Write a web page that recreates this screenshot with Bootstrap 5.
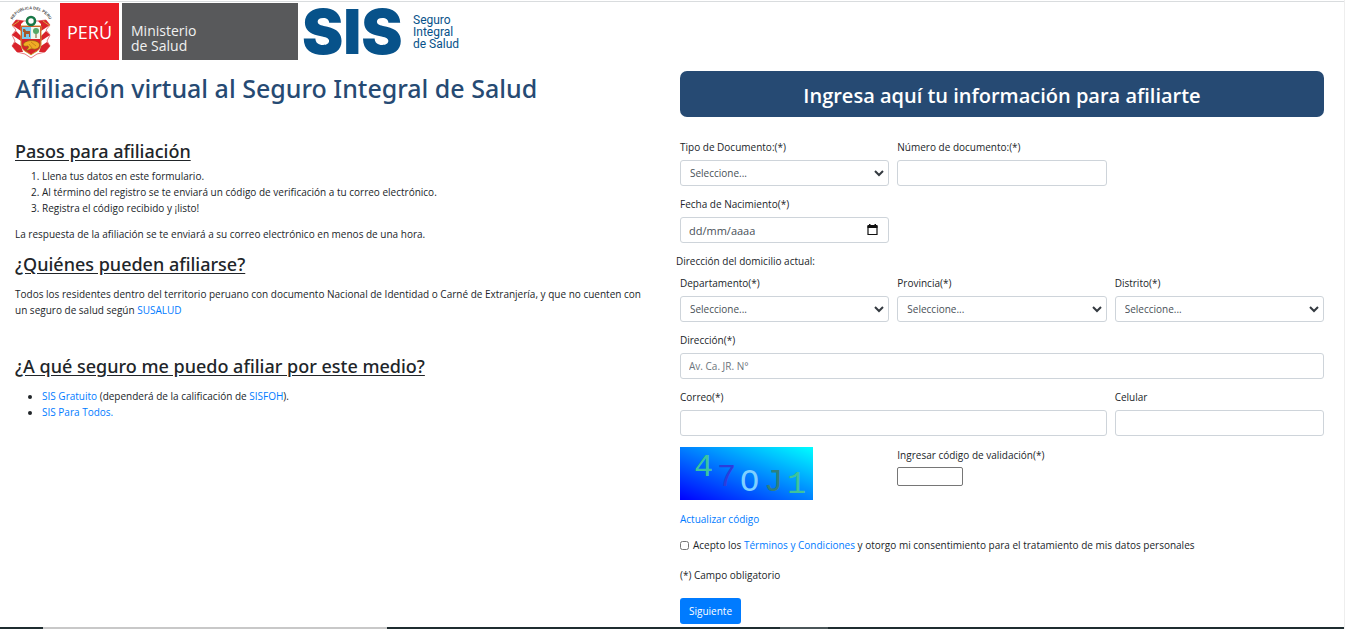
<!DOCTYPE html>
<html lang="es">
<head>
<meta charset="utf-8">
<meta name="viewport" content="width=device-width, initial-scale=1">
<title>Afiliación virtual al SIS</title>
<link href="https://cdn.jsdelivr.net/npm/bootstrap@5.3.0/dist/css/bootstrap.min.css" rel="stylesheet">
<style>
  :root { --navy: #264a73; --azul: #007bff; }
  body { font-family: "Open Sans", "Noto Sans", sans-serif; font-size: 10px; line-height: 16px; color: #212529; border-right: 1px solid #eee; }
  a { color: var(--azul); text-decoration: none; }
  .site-head { border-top: 1px solid #d9dcde; margin-top: 1px; padding: 1px 9px 0; height: 59px; margin-bottom: 2px; }
  .escudo { width: 44px; height: 57px; margin-right: 7px; flex: none; }
  .peru { background: #ed1c24; color: #fff; width: 59px; font-size: 18px; margin-right: 3px; }
  .minsa { background: #58595b; color: #f1f1f1; width: 176px; padding: 20px 9px 0; font-size: 14px; line-height: 15px; }
  .sis-mark { font: 900 62px/58px Inter, sans-serif; color: #07528a; width: 108px; padding-left: 4px; }
  .sis-name { font: 400 12px/12px Roboto, sans-serif; color: #07528a; padding: 11px 0 0 7px; }
  .side { padding: 0 24px 0 15px; }
  .title-main { font-family: "Noto Sans", "Open Sans", sans-serif; font-size: 25px; line-height: 34px; font-weight: 500; color: var(--navy); margin: 9px 0 35px; }
  .title-sub { font-family: "Noto Sans", "Open Sans", sans-serif; font-size: 18px; line-height: 22px; font-weight: 500; text-decoration: underline; text-underline-offset: 2px; margin: 0 0 11px; }
  .title-sub.first { margin-bottom: 6px; }
  .side ol, .side ul { padding-left: 27px; margin-bottom: 10px; }
  .side p { margin-bottom: 11px; }
  .side p.who { margin-bottom: 37px; }
  .form-side { padding: 9px 20px 0 8px; }
  .banner { background: var(--navy); color: #fff; border-radius: 7px; font-size: 20px; line-height: 26px; font-weight: 600; padding: 12px 8px 8px; margin-bottom: 22px; }
  .row.tight { --bs-gutter-x: 8px; }
  .group-name { padding: 0; margin-bottom: 6px; }
  .field { margin-bottom: 10px; }
  .field label { display: block; margin-bottom: 5px; }
  .field .form-control, .field .form-select { font-size: 10px; line-height: 16px; height: 26px; padding: 4px 8px; border-color: #ced4da; border-radius: 3px; color: #495057; }
  .field .form-select { padding-left: 9px; background-size: 10px 8px; background-position: right 4px center;
    background-image: url("data:image/svg+xml,%3Csvg xmlns='http://www.w3.org/2000/svg' viewBox='0 0 10 8'%3E%3Cpath d='M1 2l4 4 4-4' fill='none' stroke='%23343a40' stroke-width='2'/%3E%3C/svg%3E"); }
  .field .form-control::placeholder { color: #6c757d; }
  .field .date-box { font-size: 11px; }
  .field .date-box::placeholder { color: #495057; }
  .date-btn { right: 10px; top: 6px; width: 13px; height: 14px; padding: 0; border: 0; background: none; line-height: 0; }
  .check-row { padding-top: 1px; }
  .captcha { width: 133px; height: 53px; display: block; margin-bottom: 11px; }
  .code-box { width: 66px; height: 19px; border: 1px solid #767676; border-radius: 2px; display: block; }
  .accept { width: 9px; height: 9px; margin: 0 4px 0 0; accent-color: var(--azul); }
  .accept-row { margin: 10px 0 14px; }
  .note { margin-bottom: 15px; }
  .btn-next { background: var(--azul); color: #fff; font-size: 10px; line-height: 16px; padding: 5px 9px; border: 0; border-radius: 3px; }
  .strip { height: 2px; background: #1f2d30; }
  .strip .gap { width: 3.2%; }
  .strip .pale { width: 25.6%; background: #c8c8c8; }
  .strip .mid { width: 29.2%; }
  .strip .soft { width: 3.6%; background: #4a5558; }
</style>
</head>
<body class="bg-white">
<div class="d-flex flex-column min-vh-100">
  <header class="site-head d-flex">
    <svg class="escudo" viewBox="0 0 44 57" role="img" aria-label="Escudo del Perú">
      <defs><path id="arco" d="M3 19C7 2 37 2 41 19"/></defs>
      <text font-family="Liberation Sans, sans-serif" font-size="4" font-weight="700" fill="#444"><textPath href="#arco" startOffset="50%" text-anchor="middle">REPUBLICA DEL PERU</textPath></text>
      <path d="M16 18L7 17 3 22l4 5-4 5 3 6-3 5 5 6 8 2 6 4 6-4 8-2 5-6-3-5 3-6-4-5 4-5-4-5-9 1z" fill="#fff" stroke="#d9222a" stroke-width=".6"/>
      <path d="M15 18L7 17 3 22l9 6V21zM3 32l4-4 5 5v5zM3 43l3-4 6 4 2 6-6 0zM29 18l8-1 4 5-9 6V21zM41 32l-4-4-5 5v5zM41 43l-3-4-6 4-2 6 6 0z" fill="#d9222a"/>
      <path d="M3 23l7-5M34 18l7 5" stroke="#d8a43b" stroke-width="1"/>
      <path d="M12 23h20v18c0 7-7 8-10 11-3-3-10-4-10-11z" fill="#d9222a" stroke="#c99a2c"/>
      <path d="M13 24h9v12h-9z" fill="#79c8ee"/><path d="M22 24h9v12h-9z" fill="#f3f7ee"/>
      <path d="M15 34v-5h-1v-3h2l1 2h4v6h-1v-3h-3v3z" fill="#a5572b"/>
      <path d="M27 35v-5" stroke="#805b2c"/><circle cx="27" cy="28" r="3" fill="#55a968"/>
      <path d="M14 42c1-5 12-6 16-2 2 4-2 7-6 6-3-1-4 2-7 1 2-1 3-3 2-4-2 0-3 1-5-1z" fill="#f0ad24" stroke="#8a5a16" stroke-width=".7"/>
      <path d="M22 39l5 4M20 41l3 4" stroke="#b8721c" stroke-width=".7"/>
      <circle cx="22" cy="18" r="4" fill="#fff" stroke="#187846" stroke-width="2.6"/>
    </svg>
    <div class="peru d-flex align-items-center justify-content-center">PERÚ</div>
    <div class="minsa">Ministerio<br>de Salud</div>
    <div class="sis-mark">SIS</div>
    <div class="sis-name">Seguro<br>Integral<br>de Salud</div>
  </header>

  <main class="row g-0 flex-grow-1">
    <section class="col-6 side">
      <h1 class="title-main">Afiliación virtual al Seguro Integral de Salud</h1>
      <h2 class="title-sub first">Pasos para afiliación</h2>
      <ol>
        <li>Llena tus datos en este formulario.</li>
        <li>Al término del registro se te enviará un código de verificación a tu correo electrónico.</li>
        <li>Registra el código recibido y ¡listo!</li>
      </ol>
      <p>La respuesta de la afiliación se te enviará a su correo electrónico en menos de una hora.</p>
      <h2 class="title-sub">¿Quiénes pueden afiliarse?</h2>
      <p class="who">Todos los residentes dentro del territorio peruano con documento Nacional de Identidad o Carné de Extranjería, y que no cuenten con un seguro de salud según <a href="#">SUSALUD</a></p>
      <h2 class="title-sub">¿A qué seguro me puedo afiliar por este medio?</h2>
      <ul>
        <li><a href="#">SIS Gratuito</a> (dependerá de la calificación de <a href="#">SISFOH</a>).</li>
        <li><a href="#">SIS Para Todos.</a></li>
      </ul>
    </section>

    <section class="col-6 form-side">
      <h2 class="banner text-center">Ingresa aquí tu información para afiliarte</h2>
      <form>
        <div class="row tight">
          <div class="col-4 field"><label for="tipo">Tipo de Documento:(*)</label>
            <select id="tipo" class="form-select"><option>Seleccione...</option></select></div>
          <div class="col-4 field"><label for="numero">Número de documento:(*)</label>
            <input id="numero" type="text" class="form-control"></div>
        </div>
        <div class="row tight">
          <div class="col-4 field"><label for="fecha">Fecha de Nacimiento(*)</label>
            <div class="position-relative">
              <input id="fecha" type="text" class="form-control date-box" placeholder="dd/mm/aaaa">
              <button type="button" class="date-btn position-absolute" aria-label="Abrir calendario">
                <svg width="13" height="14" viewBox="0 0 13 14"><path d="M2 3.5h9v8H2z" fill="none" stroke="#111" stroke-width="1.2"/><path d="M1.5 2h10v3h-10zM3 1h1.5v2H3zM8.500 1H10v2H8.500z" fill="#111"/></svg>
              </button>
            </div></div>
        </div>
        <div class="row tight"><div class="group-name">Dirección del domicilio actual:</div></div>
        <div class="row tight">
          <div class="col-4 field"><label for="dep">Departamento(*)</label>
            <select id="dep" class="form-select"><option>Seleccione...</option></select></div>
          <div class="col-4 field"><label for="prov">Provincia(*)</label>
            <select id="prov" class="form-select"><option>Seleccione...</option></select></div>
          <div class="col-4 field"><label for="dist">Distrito(*)</label>
            <select id="dist" class="form-select"><option>Seleccione...</option></select></div>
        </div>
        <div class="field"><label for="dir">Dirección(*)</label>
          <input id="dir" type="text" class="form-control" placeholder="Av. Ca. JR. N°"></div>
        <div class="row tight">
          <div class="col-8 field"><label for="correo">Correo(*)</label>
            <input id="correo" type="email" class="form-control"></div>
          <div class="col-4 field"><label for="cel">Celular</label>
            <input id="cel" type="tel" class="form-control"></div>
        </div>
        <div class="row tight check-row">
          <div class="col-4">
            <svg class="captcha" viewBox="0 0 133 53" role="img" aria-label="Código de validación">
              <defs><linearGradient id="cielo" x1="0" y1="1" x2="1" y2="0"><stop offset="0" stop-color="#00f"/><stop offset="1" stop-color="#0ff"/></linearGradient></defs>
              <path d="M0 0h133v53H0z" fill="url(#cielo)"/>
              <g font-family="Liberation Mono, monospace" font-size="32">
                <text x="14" y="29" fill="#3cc4a0">4</text><text x="37" y="39" fill="#2b3ddb">7</text>
                <text x="60" y="44" fill="#7fd0ff">O</text><text x="84" y="44" fill="#2f7f80">J</text>
                <text x="107" y="46" fill="#3fc39a">1</text>
              </g>
            </svg>
            <a href="#">Actualizar código</a>
          </div>
          <div class="col-4"><label for="codigo" class="mb-1">Ingresar código de validación(*)</label>
            <input id="codigo" type="text" class="code-box"></div>
        </div>
        <div class="d-flex align-items-center accept-row"><input id="acepto" type="checkbox" class="accept">
          <label for="acepto">Acepto los <a href="#">Términos y Condiciones</a> y otorgo mi consentimiento para el tratamiento de mis datos personales</label></div>
        <p class="note">(*) Campo obligatorio</p>
        <button type="submit" class="btn btn-next d-block">Siguiente</button>
      </form>
    </section>
  </main>
  <footer class="strip d-flex" aria-hidden="true"><span class="gap"></span><span class="pale"></span><span class="mid"></span><span class="soft"></span></footer>
</div>
<script src="https://cdn.jsdelivr.net/npm/bootstrap@5.3.0/dist/js/bootstrap.bundle.min.js"></script>
</body>
</html>
